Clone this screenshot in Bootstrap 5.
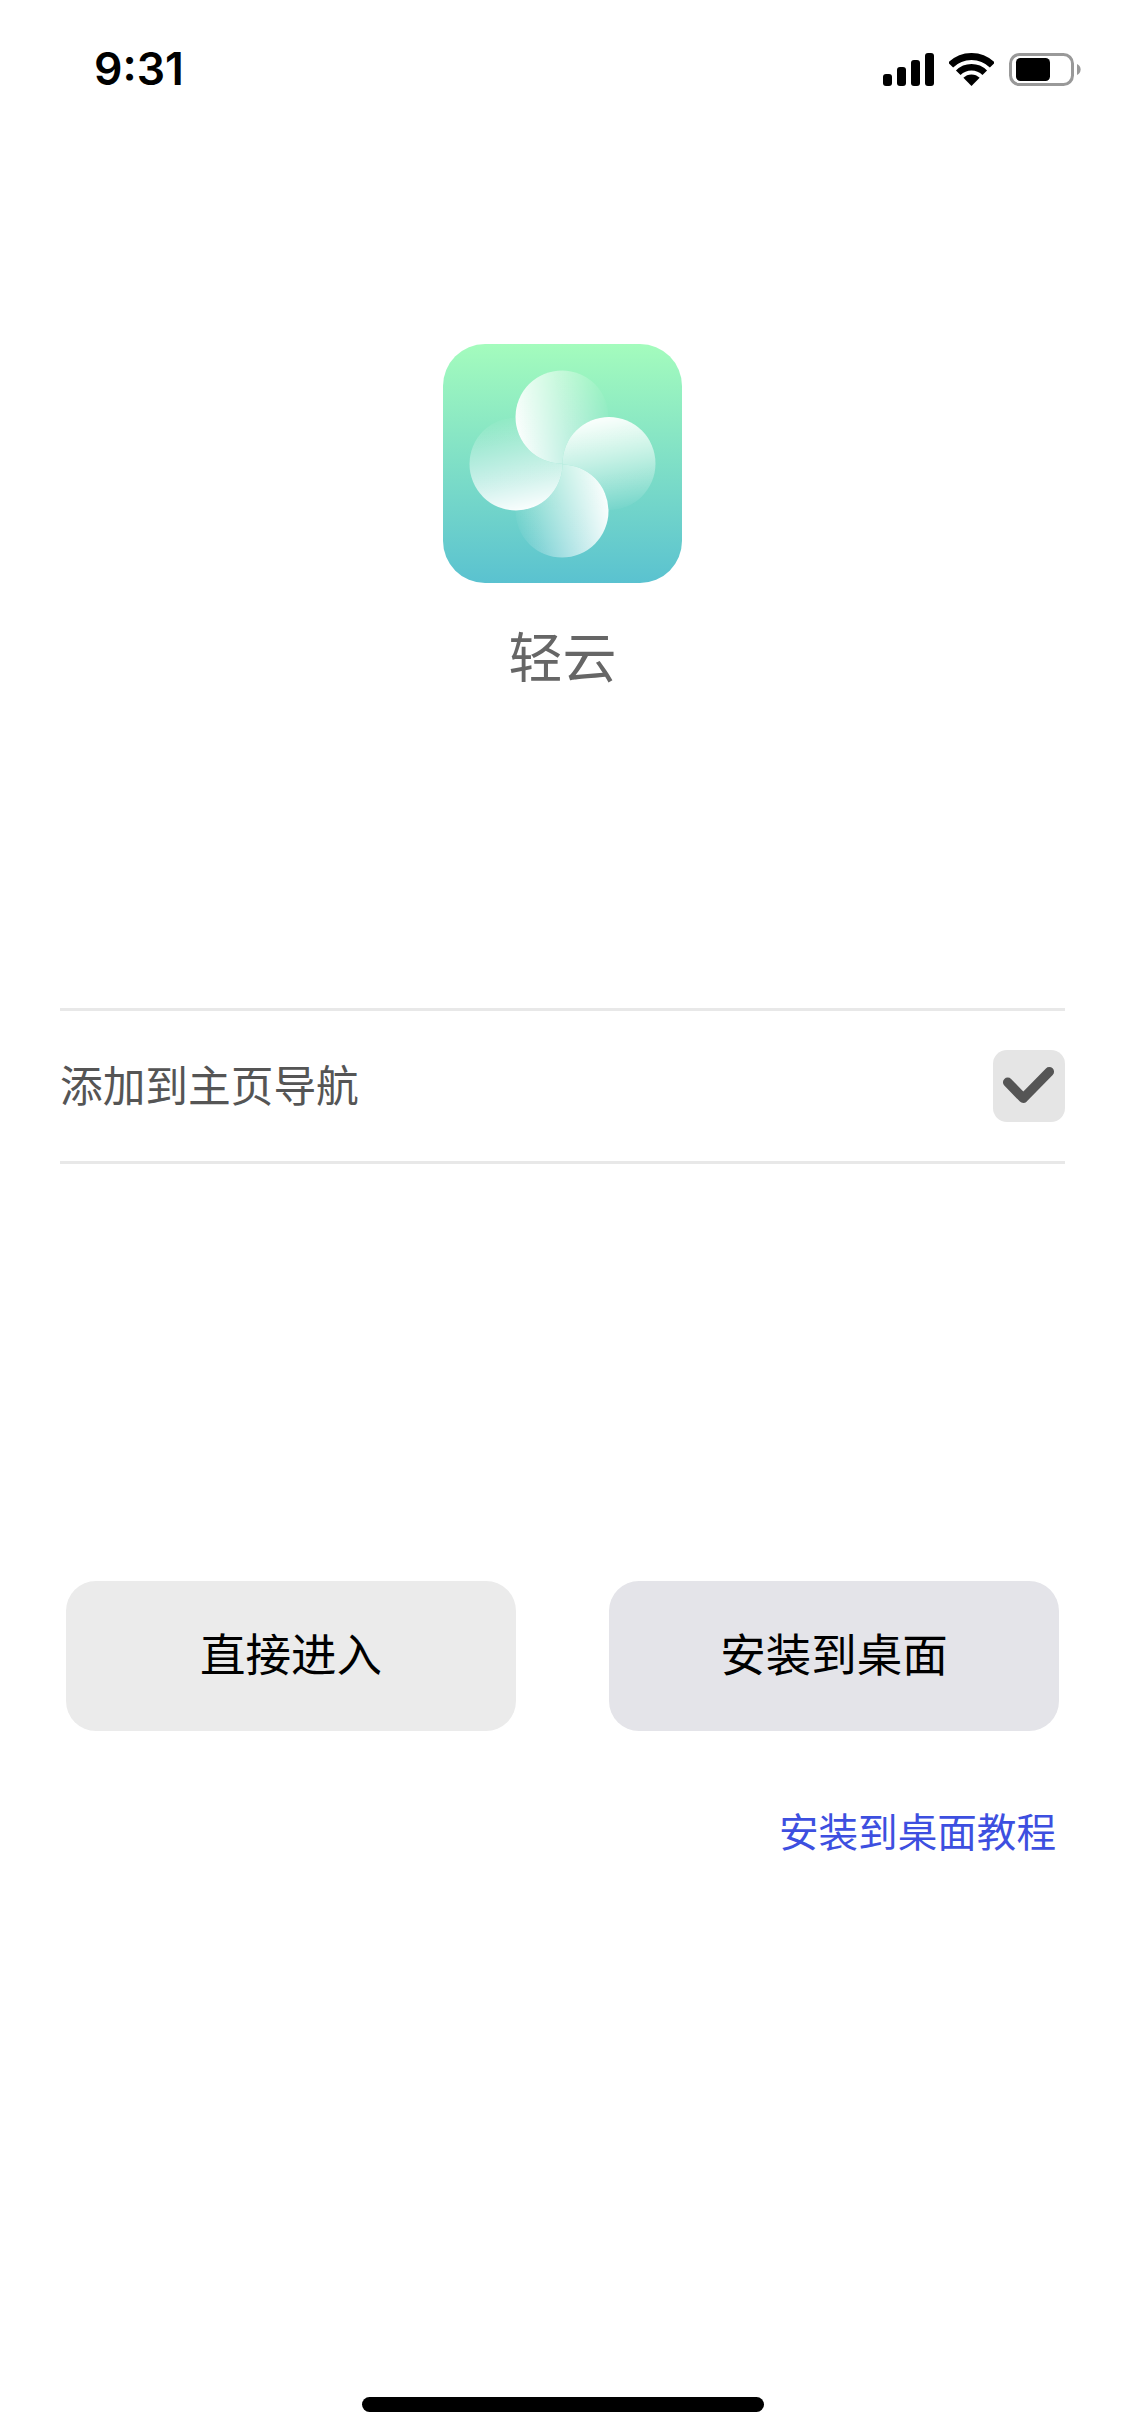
<!DOCTYPE html>
<html lang="zh-CN">
<head>
    <meta charset="UTF-8">
    <meta name="viewport" content="width=device-width, initial-scale=1">
    <title>轻云</title>
    <link rel="stylesheet" href="https://cdn.jsdelivr.net/npm/bootstrap@5.3.0/dist/css/bootstrap.min.css">
    <style>
        body {
            background: #fff;
            font-family: "Liberation Sans", "Noto Sans CJK SC", sans-serif;
        }
        .screen { width: 1125px; min-height: 2436px; }
        .status-bar { height: 100px; padding: 44px 43px 0 94px; }
        .status-time { font-family: Inter, sans-serif; font-size: 44.5px; font-weight: 600; line-height: 50px; color: #000; }
        .status-icons { gap: 15px; padding-top: 9px; }
        .app-block { margin-top: 244px; }
        .app-icon { display: block; width: 239px; height: 239px; }
        .app-name { margin: 43px 0 0; font-size: 54px; line-height: 66px; color: #666; font-weight: 400; }
        .option-row {
            margin: 316px 60px 0;
            height: 156px;
            border-top: 3px solid #e8e8e8;
            border-bottom: 3px solid #e8e8e8;
        }
        .option-label { padding-top: 2px; font-size: 42.7px; color: #555; }
        .option-check { width: 72px; height: 72px; background: #e5e5e5; border-radius: 14px; }
        .action-row { margin: 417px 66px 0 66px; gap: 93px; }
        .btn-action {
            flex: 1 1 0;
            height: 150px;
            padding-top: 8px;
            border: 0;
            border-radius: 30px;
            font-size: 45.5px;
            color: #000;
        }
        .btn-plain { background: #ebebeb; }
        .btn-install { background: #e4e4e9; }
        .guide-link { margin: 74px 69px 0 0; font-size: 39.6px; line-height: 56px; color: #3d4fe0; text-decoration: none; }
        .home-bar { width: 402px; height: 15px; margin-bottom: 24px; background: #000; border-radius: 8px; }
    </style>
</head>
<body>
    <div class="screen d-flex flex-column">
        <!-- barra de estado -->
        <div class="status-bar d-flex justify-content-between align-items-start">
            <span class="status-time">9:31</span>
            <div class="status-icons d-flex align-items-start">
                <svg width="51" height="33" viewBox="0 0 51 33">
                    <rect x="0" y="21" width="9" height="12" rx="3"/>
                    <rect x="14" y="14" width="9" height="19" rx="3"/>
                    <rect x="28" y="7" width="9" height="26" rx="3"/>
                    <rect x="42" y="0" width="9" height="33" rx="3"/>
                </svg>
                <svg width="45" height="33" viewBox="0 0 45 33">
                    <path d="M1.64 12.14A29.5 29.5 0 0 1 43.36 12.14" fill="none" stroke="#000" stroke-width="7"/>
                    <path d="M9.24 19.74A18.75 18.75 0 0 1 35.76 19.74" fill="none" stroke="#000" stroke-width="6.5"/>
                    <path d="M22.5 33L14.37 24.87A11.5 11.5 0 0 1 30.63 24.87Z"/>
                </svg>
                <svg width="73" height="33" viewBox="0 0 73 33">
                    <rect x="1.5" y="1.5" width="62" height="30" rx="9" fill="none" stroke="#999" stroke-width="3"/>
                    <rect x="7" y="5" width="34" height="23" rx="4.5"/>
                    <path d="M68 11a6 6 0 0 1 0 11Z" fill="#999"/>
                </svg>
            </div>
        </div>

        <!-- icono de la app -->
        <div class="app-block d-flex flex-column align-items-center">
            <svg class="app-icon" viewBox="0 0 239 239">
                <defs>
                    <linearGradient id="iconBg" x1="0" y1="0" x2="0" y2="1">
                        <stop offset="0" stop-color="#a4fcbd"/>
                        <stop offset="1" stop-color="#5ac2d0"/>
                    </linearGradient>
                    <linearGradient id="fadeTop" x1="0" y1=".6" x2="1" y2=".4">
                        <stop offset="0" stop-color="#fff" stop-opacity=".97"/>
                        <stop offset="1" stop-color="#fff" stop-opacity=".03"/>
                    </linearGradient>
                    <linearGradient id="fadeRight" x1=".4" y1="0" x2=".6" y2="1">
                        <stop offset="0" stop-color="#fff" stop-opacity=".97"/>
                        <stop offset="1" stop-color="#fff" stop-opacity=".03"/>
                    </linearGradient>
                    <linearGradient id="fadeBottom" x1="1" y1=".4" x2="0" y2=".6">
                        <stop offset="0" stop-color="#fff" stop-opacity=".97"/>
                        <stop offset="1" stop-color="#fff" stop-opacity=".03"/>
                    </linearGradient>
                    <linearGradient id="fadeLeft" x1=".6" y1="1" x2=".4" y2="0">
                        <stop offset="0" stop-color="#fff" stop-opacity=".97"/>
                        <stop offset="1" stop-color="#fff" stop-opacity=".03"/>
                    </linearGradient>
                    <!-- cada petalo queda cortado por el siguiente -->
                    <mask id="cutLeft"><rect width="239" height="239" fill="#fff"/><circle cx="119" cy="73" r="46.5" fill="#000"/></mask>
                    <mask id="cutTop"><rect width="239" height="239" fill="#fff"/><circle cx="166" cy="119.5" r="46.5" fill="#000"/></mask>
                    <mask id="cutRight"><rect width="239" height="239" fill="#fff"/><circle cx="119" cy="167" r="46.5" fill="#000"/></mask>
                    <mask id="cutBottom"><rect width="239" height="239" fill="#fff"/><circle cx="73" cy="120" r="46.5" fill="#000"/></mask>
                </defs>
                <rect width="239" height="239" rx="42" fill="url(#iconBg)"/>
                <circle cx="73" cy="120" r="46.5" fill="url(#fadeLeft)" mask="url(#cutLeft)"/>
                <circle cx="119" cy="73" r="46.5" fill="url(#fadeTop)" mask="url(#cutTop)"/>
                <circle cx="166" cy="119.5" r="46.5" fill="url(#fadeRight)" mask="url(#cutRight)"/>
                <circle cx="119" cy="167" r="46.5" fill="url(#fadeBottom)" mask="url(#cutBottom)"/>
            </svg>
            <h1 class="app-name">轻云</h1>
        </div>

        <!-- opcion -->
        <div class="option-row d-flex justify-content-between align-items-center">
            <span class="option-label">添加到主页导航</span>
            <span class="option-check d-block">
                <svg width="72" height="72" viewBox="0 0 72 72">
                    <path d="M14.7 32.3L30.3 48.3L56.3 21.7" fill="none" stroke="#555" stroke-width="9.5" stroke-linecap="round" stroke-linejoin="round"/>
                </svg>
            </span>
        </div>

        <!-- botones -->
        <div class="action-row d-flex">
            <button type="button" class="btn btn-action btn-plain">直接进入</button>
            <button type="button" class="btn btn-action btn-install">安装到桌面</button>
        </div>
        <a class="guide-link align-self-end" href="#">安装到桌面教程</a>

        <div class="home-bar align-self-center mt-auto"></div>
    </div>

    <script src="https://cdn.jsdelivr.net/npm/bootstrap@5.3.0/dist/js/bootstrap.bundle.min.js"></script>
</body>
</html>
